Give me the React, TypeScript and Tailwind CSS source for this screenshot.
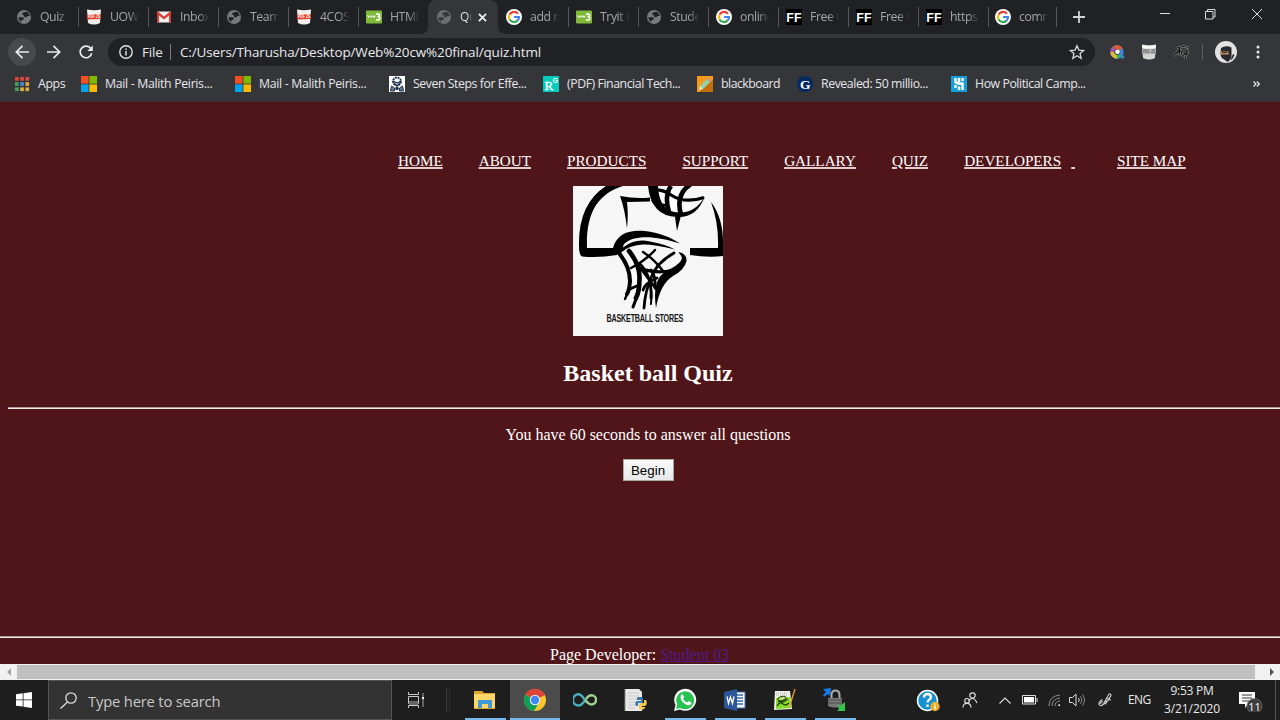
import React from "react";

const Globe = ({ dim = false }: { dim?: boolean }) => (
  <svg viewBox="0 0 16 16" className="size-4 shrink-0">
    <circle cx="8" cy="8" r="7" fill={dim ? "#6b6e72" : "#777a7e"} />
    <path d="M2.400 8.200h4q1.600.3 1.600 1.600-.2.900-1.200.9H5.600v1.300q0 1-.9.800Q2.500 11 2.400 8.200zM9.500 3l1.500-.2q2.500 1.500 2.700 4.200h-2q-.8 0-1 .9-.6.700-1.700.3-1-.5-1-1.300 0-.9-1-.9-1-.3-.8-1.300.3-1.200 1.300-1.200.8 0 1-.5z" fill={dim ? "#36373b" : "#202124"} />
  </svg>
);

const Shield = ({ gray = false }: { gray?: boolean }) => (
  <svg viewBox="0 0 16 16" className="size-4 shrink-0">
    <path d="M1 .500q7 1.500 14 0l-1 13.500q-6 3-12 0z" fill={gray ? "#d6d6d6" : "#f3efec"} />
    {gray && <path d="M1.100 1q6.900 2 13.800 0l-.2 3q-6.700 1-13.400 0z" fill="#fafafa" />}
    <path d="M.800 5.500 15.200 5 14.500 10 1.500 10.400z" fill={gray ? "#b4b4b4" : "#e5402e"} />
    <text x="8" y="9.400" textAnchor="middle" fontSize="4.500" fontWeight="700" fontFamily="Liberation Sans, sans-serif" textLength="12" lengthAdjust="spacingAndGlyphs" fill={gray ? "#666" : "#fff"}>PDF JS</text>
  </svg>
);

const Gmail = () => (
  <svg viewBox="0 0 16 16" className="size-4 shrink-0">
    <rect x="1" y="2.500" width="14" height="11" rx="1" fill="#f2f2f2" />
    <path d="M1 13.500V3.500q0-1 1-1L8 7.500l6-5q1 0 1 1v10h-2V6.500l-5 4-5-4v7z" fill="#d93f35" />
  </svg>
);

const W3 = () => (
  <svg viewBox="0 0 16 16" className="size-4 shrink-0">
    <rect y="1.500" width="16" height="13" rx="1" fill="#80b83a" />
    <path d="M1.500 6.500l1.300 2 1.400-2 1.300 2 1.400-2 1.300 2L9.300 6.500" stroke="#fff" strokeWidth="1" fill="none" />
    <path d="M10 5.200q3.500-1 3.500 1 0 1.500-2 1.500 2.600 0 2.300 2-.7 2-3.800 1" stroke="#fff" strokeWidth="1.600" fill="none" />
  </svg>
);

const Google = () => (
  <svg viewBox="0 0 16 16" className="size-4 shrink-0">
    <circle cx="8" cy="8" r="8" fill="#fff" />
    <path d="M11.900 4.700A5 5 0 0 0 3.600 5.600" stroke="#ea4335" strokeWidth="2.200" fill="none" />
    <path d="M3.600 5.600a5 5 0 0 0 0 4.800" stroke="#fbbc05" strokeWidth="2.200" fill="none" />
    <path d="M3.600 10.400a5 5 0 0 0 7.900 1.200" stroke="#34a853" strokeWidth="2.200" fill="none" />
    <path d="M11.500 11.600A4.800 4.800 0 0 0 13 8H8" stroke="#4285f4" strokeWidth="2.200" fill="none" />
  </svg>
);

const FF = () => (
  <svg viewBox="0 0 16 16" className="size-4 shrink-0">
    <rect width="16" height="16" fill="#000" />
    <text x="8" y="12.500" textAnchor="middle" fontSize="12.500" fontWeight="700" fontFamily="Liberation Sans, sans-serif" fill="#fff">FF</text>
  </svg>
);

const TABS: { icon: React.ReactNode; label: string; active?: boolean; noBorder?: boolean }[] = [
  { icon: <Globe />, label: "Quiz" },
  { icon: <Shield />, label: "UOW" },
  { icon: <Gmail />, label: "Inbox" },
  { icon: <Globe />, label: "Team" },
  { icon: <Shield />, label: "4COS" },
  { icon: <W3 />, label: "HTML", noBorder: true },
  { icon: <Globe dim />, label: "Qu", active: true },
  { icon: <Google />, label: "add n" },
  { icon: <W3 />, label: "Tryit E" },
  { icon: <Globe />, label: "Stude" },
  { icon: <Google />, label: "online" },
  { icon: <FF />, label: "Free C" },
  { icon: <FF />, label: "Free C" },
  { icon: <FF />, label: "https:" },
  { icon: <Google />, label: "comn" },
];

function TabStrip() {
  return (
    <div className="flex h-[34px] bg-[#202124] pl-2">
      {TABS.map((t, i) =>
        t.active ? (
          <div key={i} className="relative flex w-[70px] items-center rounded-t-lg bg-[#35363a] pl-2">
            <svg viewBox="0 0 86 8" className="absolute bottom-0 -left-2 h-2 w-[86px]">
              <path d="M0 8Q8 8 8 0v8zM86 8Q78 8 78 0v8z" fill="#35363a" />
            </svg>
            {t.icon}
            <span className="ml-2 w-[12px] overflow-hidden text-[12px] whitespace-nowrap text-[#dcdde0] [mask-image:linear-gradient(to_right,black_60%,transparent)]">{t.label}</span>
            <svg viewBox="0 0 10 10" className="ml-[6px] size-[9px]">
              <path d="M1 1l8 8M9 1l-8 8" stroke="#f1f3f4" strokeWidth="1.900" />
            </svg>
          </div>
        ) : (
          <div key={i} className={i === 14 ? "flex w-[69px] items-center pl-[7px]" : "-mr-px flex w-[71px] items-center pl-2"}>
            {t.icon}
            <span className="ml-2 w-[30px] overflow-hidden text-[12.300px] tracking-[-0.450px] whitespace-nowrap text-[#a2a5aa] [mask-image:linear-gradient(to_right,black_62%,transparent_98%)]">{t.label}</span>
            <span className={t.noBorder ? "hidden" : "ml-auto h-5 w-px bg-[#55575b]"} />
          </div>
        ),
      )}
      <svg viewBox="0 0 12 12" className="mt-[11px] ml-[16px] size-3">
        <path d="M6 0v12M0 6h12" stroke="#d0d2d5" strokeWidth="1.800" />
      </svg>
      <div className="mr-[18px] ml-auto flex items-start gap-[36px] pt-[9px]">
        <svg viewBox="0 0 10 10" className="size-[10px] overflow-visible"><path d="M0 4.500h10" stroke="#ddd" /></svg>
        <svg viewBox="0 0 10 10" className="-ml-px mr-px size-[10px] overflow-visible"><path d="M.5 2.500h7.500v7.500h-7.500zM2.500 2.500v-2h7.500v7.500H8" stroke="#ddd" fill="none" /></svg>
        <svg viewBox="0 0 10 10" className="size-[10px] overflow-visible"><path d="M0 0l10 10M10 0L0 10" stroke="#ddd" /></svg>
      </div>
    </div>
  );
}

function Toolbar() {
  return (
    <div className="flex h-9 items-center bg-[#35363a] pl-2 text-[#e8eaed]">
      <div className="flex size-7 items-center justify-center rounded-full bg-[#48494d]">
        <svg viewBox="0 0 14 14" className="size-[14px]"><path d="M14 7H1.500M7.500.8L1.300 7l6.200 6.200" stroke="#e8eaed" strokeWidth="1.700" fill="none" /></svg>
      </div>
      <svg viewBox="0 0 14 14" className="ml-[11px] size-[14px]"><path d="M0 7h12.500M6.500.8L12.700 7l-6.200 6.200" stroke="#e8eaed" strokeWidth="1.700" fill="none" /></svg>
      <svg viewBox="0 0 14 14" className="ml-[18px] size-[14px]">
        <path d="M11.800 3.600A5.800 5.800 0 1 0 12.700 8.200" stroke="#e8eaed" strokeWidth="1.700" fill="none" />
        <path d="M13.800.500v5.500H8.300z" fill="#e8eaed" />
      </svg>
      <div className="ml-[15px] flex h-7 w-[987px] items-center rounded-full bg-[#202124] pr-[11px] pl-[11px] text-[13.500px]">
        <svg viewBox="0 0 14 14" className="size-[14px]"><circle cx="7" cy="7" r="6.200" stroke="#dfe1e4" strokeWidth="1.400" fill="none" /><path d="M7 6v4.500M7 3.400v1.600" stroke="#dfe1e4" strokeWidth="1.500" /></svg>
        <span className="ml-[9px] w-[21px] tracking-[-0.200px]">File</span>
        <span className="ml-[7px] h-4 w-px bg-[#77797d]" />
        <span className="ml-[9px] whitespace-nowrap tracking-[-0.140px]">C:/Users/Tharusha/Desktop/Web%20cw%20final/quiz.html</span>
        <svg viewBox="0 0 24 24" className="-mr-px ml-auto size-[16px]"><path d="M12 2.500l2.900 6.600 7.100.6-5.400 4.700 1.600 7L12 17.600l-6.200 3.800 1.600-7L2 9.700l7.100-.6z" stroke="#d5d7da" strokeWidth="2" fill="none" /></svg>
      </div>
      <svg viewBox="0 0 16 16" className="ml-[14px] size-4">
        <circle cx="8" cy="8" r="4.800" stroke="#3b86d6" strokeWidth="3.800" fill="none" />
        <path d="M3.200 8a4.800 4.800 0 0 1 2-4" stroke="#b055a2" strokeWidth="3.800" fill="none" />
        <path d="M5.200 4A4.800 4.800 0 0 1 12 5.200" stroke="#e05a35" strokeWidth="3.800" fill="none" />
        <path d="M3.200 8a4.800 4.800 0 0 0 4.800 4.800" stroke="#dfb936" strokeWidth="3.800" fill="none" />
        <path d="M8 12.800a4.800 4.800 0 0 0 3.500-1.500" stroke="#35ab62" strokeWidth="3.800" fill="none" />
        <circle cx="8.500" cy="7.800" r="2.300" fill="#fff" /><circle cx="13.500" cy="13" r="1.800" fill="#3b86d6" />
      </svg>
      <span className="ml-4"><Shield gray /></span>
      <svg viewBox="0 0 16 16" className="ml-4 size-4 overflow-visible">
        <path d="M1 12Q5 8 7 3l-1 9M2 9l6-2M4 4q6-3 12 0M10 6q-3 2-1 5 2 1 3-2M13 4q1 6-1 11M12 8q3-3 3 0t-3 2" stroke="#a2a2a2" strokeWidth="2.200" fill="none" />
        <path d="M1 12Q5 8 7 3l-1 9M2 9l6-2M4 4q6-3 12 0M10 6q-3 2-1 5 2 1 3-2M13 4q1 6-1 11M12 8q3-3 3 0t-3 2" stroke="#151515" strokeWidth="1.200" fill="none" />
      </svg>
      <span className="ml-[13px] h-4 w-px bg-[#5d5e62]" />
      <svg viewBox="0 0 22 22" className="ml-[12px] size-[22px]">
        <circle cx="11" cy="11" r="11" fill="#e2e2e2" />
        <path d="M6 7q5-3 10.500-.5v9.500l-2 3.500-2 1.500-4-3Q5.500 17 5.500 12z" fill="#2a2a2e" />
        <path d="M5.500 10.500h8v3h-8z" fill="#c58f63" /><path d="M7 11.500h5" stroke="#333" strokeWidth="1" />
        <path d="M18 13l1.500 1-2.500 4.500-1.500.5z" fill="#202024" />
      </svg>
      <svg viewBox="0 0 4 14" className="ml-[19px] h-[14px] w-1"><g fill="#e8eaed"><circle cx="2" cy="2" r="1.500" /><circle cx="2" cy="7" r="1.500" /><circle cx="2" cy="12" r="1.500" /></g></svg>
    </div>
  );
}

const Microsoft = () => (
  <svg viewBox="0 0 16 16" className="size-4 shrink-0">
    <path d="M0 0h7.600v7.600H0z" fill="#f25022" /><path d="M8.400 0H16v7.600H8.400z" fill="#7fba00" />
    <path d="M0 8.400h7.600V16H0z" fill="#00a4ef" /><path d="M8.400 8.400H16V16H8.400z" fill="#ffb900" />
  </svg>
);

const APP_DOTS = ["#e0483e", "#e0483e", "#e0483e", "#43a35b", "#4a86e0", "#dfae3c", "#43a35b", "#dfae3c", "#dfae3c"];

const BOOKMARKS: { icon: React.ReactNode; label: string; box: string; track: string }[] = [
  {
    icon: (
      <svg viewBox="0 0 16 16" className="size-4 shrink-0">
        {APP_DOTS.map((c, i) => <rect key={i} x={1 + (i % 3) * 5.2} y={1 + Math.floor(i / 3) * 5.2} width="3.700" height="3.700" fill={c} />)}
      </svg>
    ), label: "Apps", box: "w-[67px]", track: "tracking-[-0.350px]",
  },
  { icon: <Microsoft />, label: "Mail - Malith Peiris...", box: "w-[154px]", track: "tracking-[-0.320px]" },
  { icon: <Microsoft />, label: "Mail - Malith Peiris...", box: "w-[154px]", track: "tracking-[-0.320px]" },
  {
    icon: (
      <svg viewBox="0 0 16 16" className="size-4 shrink-0">
        <rect width="16" height="16" fill="#fff" />
        <circle cx="8" cy="5.500" r="4" stroke="#1f3350" strokeWidth="1.800" strokeDasharray="2 .7" fill="none" />
        <path d="M4 5l4 2 4-2M5 7l3 3 3-3" stroke="#1f3350" strokeWidth="1.200" fill="none" />
        <path d="M1.500 15l1-5 3 2v3zM14.500 15l-1-5-3 2v3z" stroke="#1f3350" strokeWidth="1" fill="#66758c" />
        <circle cx="8" cy="12.500" r="1.800" fill="#1f3350" />
      </svg>
    ), label: "Seven Steps for Effe...", box: "w-[154px]", track: "tracking-[-0.440px]",
  },
  {
    icon: (
      <svg viewBox="0 0 16 16" className="size-4 shrink-0">
        <rect width="16" height="16" fill="#0cb" />
        <text x="1.500" y="13.500" fontSize="13" fontFamily="Liberation Serif, serif" fill="#fff" stroke="#fff" strokeWidth=".4">R</text>
        <text x="9.500" y="7" fontSize="7" fontWeight="700" fontFamily="Liberation Sans, sans-serif" fill="#fff">G</text>
      </svg>
    ), label: "(PDF) Financial Tech...", box: "w-[154px]", track: "tracking-[-0.440px]",
  },
  {
    icon: (
      <svg viewBox="0 0 16 16" className="size-4 shrink-0">
        <rect width="16" height="16" fill="#f39a1e" /><path d="M2 16L16 4v12z" fill="#c46f0c" />
        <path d="M2 14l1-4L11 2l3 3-8 8z" fill="#8ed3ae" /><path d="M10 3l1-1 3 3-1 1z" fill="#ef6f62" /><path d="M2 14l1-4 3 3z" fill="#f8ddaf" />
      </svg>
    ), label: "blackboard", box: "w-[100px]", track: "tracking-[-0.500px]",
  },
  {
    icon: (
      <svg viewBox="0 0 16 16" className="size-4 shrink-0">
        <circle cx="8" cy="8" r="8" fill="#052962" />
        <text x="8" y="12.800" textAnchor="middle" fontSize="13.500" fontWeight="700" fontFamily="Liberation Serif, serif" fill="#fff">G</text>
      </svg>
    ), label: "Revealed: 50 millio...", box: "w-[154px]", track: "tracking-[-0.430px]",
  },
  {
    icon: (
      <svg viewBox="0 0 16 16" className="size-4 shrink-0">
        <rect width="16" height="16" fill="#149fd8" />
        <path d="M4.500 2v5M8 2v7M11.500 2v3M11.500 6.500v7.500M4.500 9v3M8 10.500v3.500M4.500 7H8M8 7.500h3.500" stroke="#fff" strokeWidth="2.400" fill="none" />
      </svg>
    ), label: "How Political Camp...", box: "w-[154px]", track: "tracking-[-0.440px]",
  },
];

function Bookmarks() {
  return (
    <div className="flex h-8 items-center bg-[#35363a] pb-1 pl-[14px] text-[12.300px] text-[#e6e7e9]">
      {BOOKMARKS.map((b, i) => (
        <div key={i} className={`flex shrink-0 items-center gap-2 whitespace-nowrap ${b.track} ${b.box}`}>
          {b.icon}
          <span>{b.label}</span>
        </div>
      ))}
      <svg viewBox="0 0 7 6" className="mr-[20px] ml-auto h-[6px] w-[7px]"><path d="M.5.500L3 3 .5 5.500M3.800.500L6.300 3 3.800 5.500" stroke="#e8eaed" strokeWidth="1.200" fill="none" /></svg>
    </div>
  );
}

function StoreLogo() {
  return (
    <svg viewBox="0 0 150 150" className="size-[150px]">
      <rect width="150" height="150" fill="#f6f6f6" />
      <path d="M33 0h17C25 8 13 26 14 62h32l-2 7Q26 72 9 70.500 6 69 6 60 5 18 33 0z" fill="#000" />
      <path d="M138 16q12 16 12 40v14q-15 2-33-1v-7h28q1-24-7-46z" fill="#000" />
      <path d="M47 10q16 3 30 1.500v4L54 16q1.500 12 0 26.500-2-19-7-32.500zM102 31l6-1.500-4 15.500z" fill="#000" />
      <path d="M83 4l14 2 1 20q-12-6-15-22zM98 3l10 2-3 9-10-4zM98 13l8 4 1 10-9-1zM110 17l12 0-9 9z" fill="#fff" />
      <path d="M75 0q3 30 29 31 20 1 28-21-9 17-26 16.500Q86 26 85 0z" fill="#000" />
      <g stroke="#000" fill="none">
        <path d="M98 0Q91 10 96 26" strokeWidth="4.600" />
        <path d="M118-2Q102 8 108 29" strokeWidth="4.600" />
        <path d="M79 4q11-1 19 5 14 9 33 2.500" strokeWidth="3.200" />
        <path d="M79 14q3 5 7 4l10 2" strokeWidth="2.400" />
      </g>
      <path d="M40 62C44 47 57 43.500 72 45 86 46.500 97 51 107 57.500 84 50 61 48 51 58q-1 2-1 3.500Q62 52 77 55.500 92 58 102 63.500 79 58 70 58.500 60 59 53 63l-7 5q-5-1-6-6z" fill="#000" />
      <path d="M55 66l12 16-1 24-8-2 1-22zM70 86l9 6-8 8zM82 87l23-3-14 10-6 10z" fill="#fff" />
      <path d="M44 67l6-1q10 13 9.500 30-1 10-8.500 17 4-10 3-18-1-13-10-28zM55 63q14 15 15 29 0 18-12 31 6-17 4-31-2-13-12-28zM113 66q-25 15-31 31-7 10-11 27-3-17 3-29 8-17 28-28z" fill="#000" fillOpacity="0" />
      <g stroke="#000" fill="none" strokeLinecap="round">
        <path d="M46 67Q57 81 57 95q-.5 9-3 13" strokeWidth="4" />
        <path d="M57 95q-.5 9-5 18" strokeWidth="2.400" />
        <path d="M56 65q11 14 10.500 27 0 14-3.500 20" strokeWidth="4.600" />
        <path d="M65 104q-1 9-5 17" strokeWidth="3" />
        <path d="M70 66Q81 73 90 85M82 64Q72 75 58 82" strokeWidth="2.400" />
        <path d="M101 67Q83 77 78 92 72 106 71 122" strokeWidth="2.800" />
        <path d="M67 78q12 12 11 34M69 84l14 19M84 92q-12 5-14 12M57 103l9-4M78 84q5 6 4 18" strokeWidth="2.800" />
        <path d="M66 82q14 5 27 3.500 12-1 18-9.500" strokeWidth="3.200" />
        <path d="M78 100q1 10 0 18" strokeWidth="2" />
      </g>
      <path d="M106 66q8 2 7.500 9-2 9-13.500 15-13 8-17 32-3-20 3-30 3-5 13-10 9-5 10-10-1-3-3-5z" fill="#000" />
      <text x="54" y="136" fontSize="11.600" fontWeight="700" fontFamily="Liberation Sans, sans-serif" textLength="124" transform="scale(.62 1)" fill="#161616" lengthAdjust="spacing">BASKETBALL STORES</text>
    </svg>
  );
}

const NAV = ["HOME", "ABOUT", "PRODUCTS", "SUPPORT", "GALLARY", "QUIZ", "DEVELOPERS"];

function Page() {
  return (
    <main className="flex h-[562px] flex-col overflow-hidden bg-[#4f1519] font-['Liberation_Serif',serif] text-white">
      <nav className="flex h-[84px] items-end pb-[16px] pl-[398px] text-[15.200px] leading-[18px] whitespace-nowrap">
        {NAV.map((n) => <a key={n} className="mr-9 underline decoration-[#e3cfcf] decoration-2">{n}</a>)}
        <a className="-ml-[26px] mr-[42px] whitespace-pre underline decoration-[#e3cfcf] decoration-2">{" "}</a>
        <a className="underline decoration-[#e3cfcf] decoration-2">SITE MAP</a>
      </nav>
      <div className="flex w-[1296px] flex-col items-center">
        <StoreLogo />
        <h2 className="mt-[24px] text-[24px] leading-[27px] font-bold">Basket ball Quiz</h2>
        <hr className="mt-[20px] h-[2px] w-[1280px] border-0 border-t border-b border-t-[#b09a9b] border-b-[#eee]" />
        <p className="mt-[17px] text-[16px] leading-[18px]">You have 60 seconds to answer all questions</p>
        <button className="mt-[15px] h-[22px] w-[51px] border border-[#a7a7a7] bg-gradient-to-b from-[#f8f8f8] to-[#e8e8e8] font-['Liberation_Sans',sans-serif] text-[13.333px] leading-[19px] text-black">Begin</button>
      </div>
      <footer className="mt-auto h-[28px]">
        <hr className="h-[2px] border-0 border-t border-b border-t-[#b09a9b] border-b-[#eee]" />
        <p className="mt-[8px] pl-[550px] text-[16px] leading-[18px]">Page Developer: <a className="text-[#551a8b] underline">Student 03</a></p>
      </footer>
    </main>
  );
}

function ScrollBar() {
  return (
    <div className="flex h-4 items-center border-t border-b border-[#f1f1f1] bg-[#f1f1f1]">
      <div className="flex w-[17px] justify-center"><svg viewBox="0 0 4 8" className="h-2 w-1"><path d="M4 0v8L0 4z" fill="#a3a3a3" /></svg></div>
      <div className="h-full w-[1238px] bg-[#c1c0c0]" />
      <div className="ml-[8px] flex w-[17px] justify-center"><svg viewBox="0 0 4 8" className="h-2 w-1"><path d="M0 0v8l4-4z" fill="#505050" /></svg></div>
    </div>
  );
}

const APPS: { open?: boolean; focus?: boolean; icon: React.ReactNode }[] = [
  {
    open: true, icon: (
      <><path d="M1 3h8l2 2h11v16H1z" fill="#dda42f" /><path d="M1 6h21v14H1z" fill="#ffd667" /><path d="M5 12h14v8h-4v-4H9v4H5z" fill="#3f9bd8" /></>
    ),
  },
  {
    open: true, focus: true, icon: (
      <><circle cx="12" cy="12" r="11" fill="#fbc52b" /><path d="M12 12L2.300 6.600A11 11 0 0 1 22 7z" fill="#db4437" /><path d="M12 12L2.300 6.600A11 11 0 0 0 11 23l5-8.500z" fill="#109d58" /><circle cx="12" cy="12" r="5.200" fill="#f5f5f5" /><circle cx="12" cy="12" r="4.200" fill="#4285f4" /></>
    ),
  },
  {
    icon: (
      <><path d="M12 12C9 8 8 6.300 5.500 6.300a5.600 5.600 0 0 0 0 11.200C9 17.500 11 14 13 11" stroke="#49adbd" strokeWidth="2.400" fill="none" /><path d="M13 11c2-3 3.300-3.700 5.500-3.700a4.500 4.500 0 0 1 0 9.200C16 16.500 14.500 14.500 12 12" stroke="#a1ce91" strokeWidth="2.400" fill="none" /></>
    ),
  },
  {
    icon: (
      <><path d="M2 1h14l3 3v19H2z" fill="#e9e9e9" /><path d="M5 5h11M5 8h11M5 11h8M5 14h7M5 17h7M5 20h7" stroke="#c9c9c9" /><path d="M2 1v22" stroke="#888" strokeWidth="1.500" strokeDasharray="1.500 1" />
        <path d="M15 9h3q2 0 2 2v4h-5v3h-2q-2-4 1-5h4v-1h-4q-1-2 1-3z" fill="#3878ad" /><path d="M21 12h2q2 4-1 6h-3v1h3v1q-2 3-6 1v-4q0-2 5-2z" fill="#f6ca45" /></>
    ),
  },
  {
    open: true, icon: (
      <><path d="M1 23l1.500-6A11 11 0 1 1 7 21.500z" fill="#fff" /><path d="M3 21l1.200-4.500A9 9 0 1 1 7.500 20z" fill="#28c250" /><path d="M8 7q1-1.500 2 0l1 2q0 1-1 1.800 1.500 2.700 4 3.700l1.500-1.500 3 1.500q.3 2-2 2.800-3 .5-6-2.500Q6.500 11 8 7z" fill="#fff" /></>
    ),
  },
  {
    open: true, icon: (
      <><path d="M11 4h11v16H11z" fill="#f8f8f8" stroke="#4773b3" /><path d="M14 7h6M14 10h6M14 13h6M14 16h6" stroke="#3967a8" strokeWidth="1.300" /><path d="M1 4l13-3v22L1 20z" fill="#2b579a" /><path d="M4 8.500l1.500 7 2-6.500 2 6.500 1.500-7" stroke="#fff" strokeWidth="1.300" fill="none" /></>
    ),
  },
  {
    open: true, icon: (
      <><path d="M2 3h15l2 18-18 1z" fill="#f1f3e9" /><path d="M3 10l14-1 1 11-15 1z" fill="#86dc24" /><path d="M3 5h12M3 7h12" stroke="#aaa" strokeWidth="1.200" strokeDasharray="1 1" /><ellipse cx="9" cy="10.500" rx="4" ry="2" stroke="#223b12" fill="#b9e66e" transform="rotate(-15 9 10.500)" /><path d="M4 18q3-5 6-2 3 2 6-1M5 14q3-1 5 0l5-3" stroke="#223b12" strokeWidth="1.300" fill="none" /><path d="M22 1l-6 19" stroke="#e5a13b" strokeWidth="1.300" /></>
    ),
  },
  {
    open: true, icon: (
      <><path d="M8.500 11V7q0-4.500 4-4.500t4 4.500v4" stroke="#aaa" strokeWidth="2" fill="none" /><path d="M5 10h14v8q-7 3-14 0z" fill="#777" /><path d="M5 12h14M5 15h14" stroke="#515151" /><path d="M0 1l8-1-1 8-2-2-4 3-1-2 3-3z" fill="#1778e9" /><path d="M14 16l3 2 5-4v9h-8l2-2z" fill="#32c84b" /></>
    ),
  },
];

function TaskBar() {
  return (
    <div className="flex h-10 items-center bg-[#1e1e1e] text-[#e8e8e8]">
      <svg viewBox="0 0 16 16" className="ml-4 size-4"><path d="M0 2.300L6.700 1.300V7.500H0zM7.500 1.200L16 0v7.500H7.500zM0 8.300h6.700v6.300L0 13.700zM7.500 8.300H16V16l-8.500-1.200z" fill="#fff" /></svg>
      <div className="ml-4 flex h-full w-[344px] items-center border border-[#555] bg-[#333] pl-[11px] text-[14.800px] text-[#c9c9c9]">
        <svg viewBox="0 0 17 17" className="size-[17px]"><circle cx="11" cy="6" r="5.200" stroke="#ddd" strokeWidth="1.300" fill="none" /><path d="M7.500 10L.5 16.500" stroke="#ddd" strokeWidth="1.300" /></svg>
        <span className="mt-[2px] ml-[11px] tracking-[-0.200px] whitespace-nowrap">Type here to search</span>
      </div>
      <svg viewBox="0 0 17 16" className="ml-4 h-4 w-[17px]"><path d="M.5 0v2.500h10V0M.5 16v-2.500h10V16M.5 4.500h10v7H.5z" stroke="#ccc" fill="none" /><path d="M1 9h9v4H1z" fill="#666" /><path d="M15 1v14" stroke="#777" strokeWidth="1.500" /><path d="M14 5h2v2h-2z" fill="#fff" /></svg>
      <span className="ml-[21px] h-6 w-px bg-[#3d3d3d]" />
      <span className="ml-[2px] h-6 w-px bg-[#2d2d2d]" />
      <div className="ml-[10px] flex h-full">
        {APPS.map((a, i) => (
          <div key={i} className={a.focus ? "flex h-full w-[50px] flex-col items-center bg-[#4b4b4b]" : "flex h-full w-[50px] flex-col items-center"}>
            <svg viewBox="0 0 24 24" className="mt-2 size-6">{a.icon}</svg>
            <span className={a.focus ? "mt-auto h-[2px] w-full bg-[#76b9ed]" : a.open ? "mt-auto h-[2px] w-[41px] bg-[#76b9ed]" : "hidden"} />
          </div>
        ))}
      </div>
      <svg viewBox="0 0 24 24" className="ml-[56px] size-6">
        <circle cx="11.500" cy="12.500" r="10" fill="#1592d2" stroke="#fff" strokeWidth="1.500" />
        <path d="M8 9.500q0-3.500 3.500-3.500T15 9.300c0 2-3.500 2.400-3.500 5.200M11.500 16.500v2.500" stroke="#fff" strokeWidth="2.300" fill="none" />
        <circle cx="19" cy="18.500" r="4.700" fill="#e9ad2b" /><path d="M19 17.500v4M19 15.500v1.300" stroke="#fff" strokeWidth="1.300" />
      </svg>
      <svg viewBox="0 0 16 16" className="ml-[22px] size-4"><g stroke="#ddd" strokeWidth="1.200" fill="none"><circle cx="10.500" cy="3.500" r="2.700" /><path d="M7 9q1-2.500 3.500-2.500T15 11" /><circle cx="5" cy="8.800" r="2.300" /><path d="M1 15.500q0-4.200 4-4.200t4 4.200" /></g></svg>
      <svg viewBox="0 0 12 7" className="ml-[21px] h-[7px] w-3"><path d="M.5 6.500L6 1l5.500 5.500" stroke="#ddd" strokeWidth="1.100" fill="none" /></svg>
      <svg viewBox="0 0 16 10" className="ml-[11px] h-[10px] w-4"><path d="M.5.500h13v8.500H.5zM15 3v4" stroke="#ddd" fill="none" /><path d="M2 2h10v5.500H2z" fill="#fff" /></svg>
      <svg viewBox="0 0 13 13" className="ml-[10px] size-[13px]"><g stroke="#8c8c8c" strokeWidth="1" fill="none"><path d="M1 12Q1 2 12 1M4 12q0-7 8-8M7 12q0-4.500 5-5" /></g><path d="M10 12q0-2 2-2v2z" fill="#ddd" /></svg>
      <svg viewBox="0 0 16 14" className="ml-[8px] h-[14px] w-4"><path d="M.5 4.500h3L7 1v12L3.500 9.500h-3zM9.500 5q1.500 2 0 4" stroke="#ddd" fill="none" /><path d="M11.500 3.200q3 3.800 0 7.600M13.500 1.500q4 5.500 0 11" stroke="#888" fill="none" /></svg>
      <svg viewBox="0 0 14 14" className="ml-[13px] size-[14px]"><path d="M6 10L11 1q2-.5 2 1.500L7.500 11zM8.500 5l3 1.500M4.500 6.500q-4 2-3.500 5 2 2.500 4.500-.5l2-2.500q3-.5 4-2.500l1 1.500M5 8.500q-2 0-2.500 2.500" stroke="#ccc" strokeWidth="1.200" fill="none" /></svg>
      <span className="ml-[16px] w-[23px] text-[12px] tracking-[-0.600px]">ENG</span>
      <div className="ml-[9px] flex w-[64px] flex-col items-center text-[12px] leading-[18px] whitespace-nowrap"><span className="tracking-[-0.250px]">9:53 PM</span><span className="tracking-[-0.100px]">3/21/2020</span></div>
      <div className="relative ml-[15px] h-6 w-6 text-white">
        <svg viewBox="0 0 24 24" className="size-6"><path d="M0 4h16v12H9l-3 4v-4H0z" fill="#fff" /><path d="M3 7h10M3 10h10M3 13h7" stroke="#333" /><circle cx="15.500" cy="18" r="7.600" fill="#3d3d3d" stroke="#777" strokeWidth=".7" /></svg>
        <span className="absolute top-[11px] left-[8px] w-[15px] text-center text-[11px] leading-[15px]">11</span>
      </div>
      <span className="mr-1 ml-auto h-full w-px bg-[#555]" />
    </div>
  );
}

export default function App() {
  return (
    <div className="flex h-[720px] w-[1280px] flex-col overflow-hidden font-['Open_Sans','Noto_Sans',sans-serif]">
      <TabStrip />
      <Toolbar />
      <Bookmarks />
      <Page />
      <ScrollBar />
      <TaskBar />
    </div>
  );
}
